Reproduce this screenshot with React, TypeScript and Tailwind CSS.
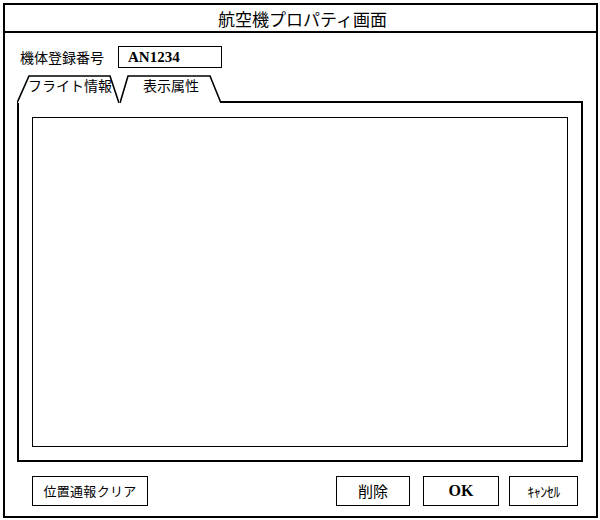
import React from 'react';

const jp = { fontFamily: '"Noto Sans CJK JP", "Noto Sans", sans-serif' };

function Tab({ label, points, active }: { label: string; points: string; active?: boolean }) {
  return (
    <div className="relative w-[102px] h-[28px] flex items-start justify-center">
      <svg className="absolute inset-0" width="102" height="28" viewBox="0 0 102 28" fill="none">
        <polyline points={points} stroke="#000" strokeWidth="1.6" fill="#fff" />
      </svg>
      <span className={`relative text-[14px] leading-[20px] text-black ${active ? 'pl-[4px]' : 'pl-[2px]'}`}>{label}</span>
    </div>
  );
}

function Btn({ w, children, serif }: { w: string; children: React.ReactNode; serif?: boolean }) {
  return (
    <div
      className={`${w} h-[30px] border-[1.5px] border-black flex items-center justify-center text-black`}
      style={serif ? { fontFamily: '"Liberation Serif", serif' } : undefined}
    >
      {children}
    </div>
  );
}

export default function App() {
  return (
    <div className="w-[600px] h-[520px] bg-white pt-[3px] pl-[3px]" style={jp}>
      <div className="w-[595px] h-[515px] border-2 border-black flex flex-col">
        <div className="h-[28px] border-b-2 border-black flex items-center justify-center">
          <span className="text-[17px] leading-none text-black pl-[4px]">航空機プロパティ画面</span>
        </div>

        <div className="mt-[13px] pl-[15px] flex items-center gap-[14px]">
          <span className="text-[14px] leading-none text-black w-[84px]">機体登録番号</span>
          <div className="w-[104px] h-[22px] border-[1.5px] border-black flex items-center pl-[9px]">
            <span className="text-[15px] font-semibold text-black" style={{ fontFamily: '"Liberation Serif", serif' }}>
              AN1234
            </span>
          </div>
        </div>

        <div className="mt-[7px] ml-[12px] flex items-end w-[566px]">
          <Tab label="フライト情報" points="0,28 12,1 93,1 102,28" active />
          <Tab label="表示属性" points="1,28 9,1 91,1 102,28" />
          <div className="flex-1 h-[28px] border-b-2 border-black" />
        </div>

        <div className="ml-[12px] w-[566px] h-[359px] border-l-2 border-r-2 border-b-2 border-black pt-[14px] px-[13px] pb-[13px]">
          <div className="w-full h-full border-[1.5px] border-black" />
        </div>

        <div className="mt-[14px] flex items-center">
          <div className="ml-[27px]">
            <Btn w="w-[116px]">
              <span className="text-[13px] tracking-[0.3px]">位置通報クリア</span>
            </Btn>
          </div>
          <div className="ml-[188px]">
            <Btn w="w-[74px]">
              <span className="text-[15px]">削除</span>
            </Btn>
          </div>
          <div className="ml-[13px]">
            <Btn w="w-[76px]" serif>
              <span className="text-[16px] font-bold">OK</span>
            </Btn>
          </div>
          <div className="ml-[10px]">
            <Btn w="w-[69px]">
              <span className="text-[14px] tracking-[-0.5px]">ｷｬﾝｾﾙ</span>
            </Btn>
          </div>
        </div>
      </div>
    </div>
  );
}
